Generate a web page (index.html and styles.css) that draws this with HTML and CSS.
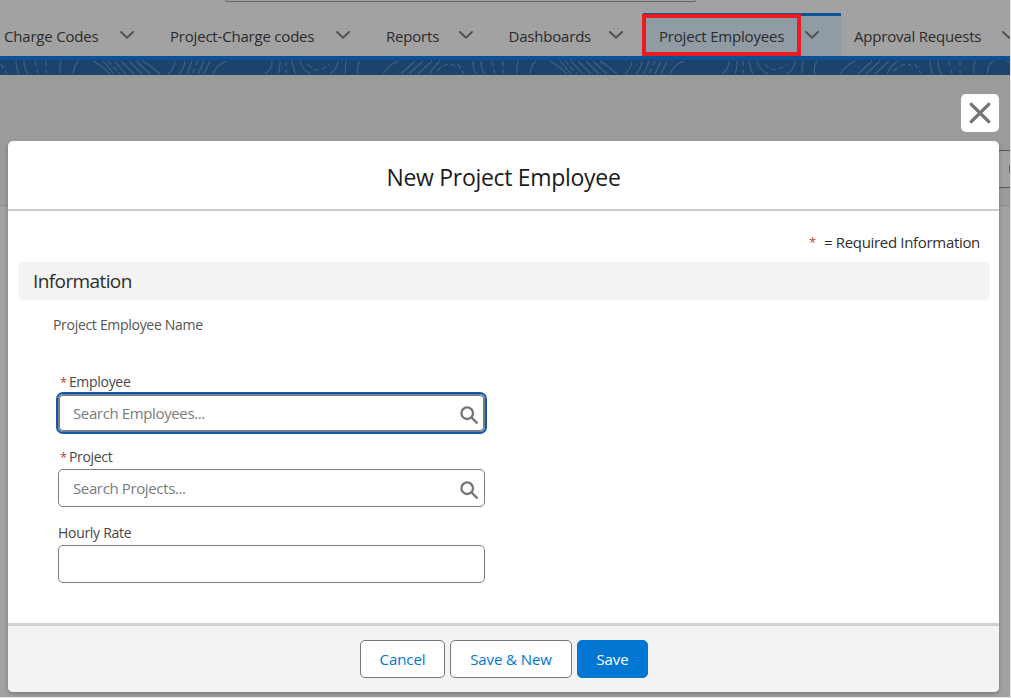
FILE: index.html
```html
<!DOCTYPE html>
<html lang="en">
<head>
    <meta charset="UTF-8">
    <meta name="viewport" content="width=device-width, initial-scale=1.0">
    <title>New Project Employee</title>
    <link rel="stylesheet" href="styles.css">
</head>
<body>
    <svg width="0" height="0" class="symbols">
        <symbol id="chevron" viewBox="0 0 14 8"><path d="M1 1l6 5.7L13 1" fill="none" stroke="currentColor" stroke-width="1.9" stroke-linecap="round"/></symbol>
        <symbol id="search" viewBox="0 0 18 18"><circle cx="7.2" cy="7.2" r="5.8" fill="none" stroke="currentColor" stroke-width="2.3"/><path d="M11.5 11.5l5.2 5.2" fill="none" stroke="currentColor" stroke-width="2.4" stroke-linecap="round"/></symbol>
    </svg>

    <div class="page">
        <div class="topbar">
            <div class="global-search"></div>
        </div>
        <nav class="nav">
            <a class="nav-item"><span>Charge Codes</span><svg><use href="#chevron"/></svg></a>
            <a class="nav-item"><span>Project-Charge codes</span><svg><use href="#chevron"/></svg></a>
            <a class="nav-item"><span>Reports</span><svg><use href="#chevron"/></svg></a>
            <a class="nav-item"><span>Dashboards</span><svg><use href="#chevron"/></svg></a>
            <a class="nav-item active"><span>Project Employees</span><svg><use href="#chevron"/></svg><i class="highlight"></i></a>
            <a class="nav-item"><span>Approval Requests</span><svg><use href="#chevron"/></svg></a>
        </nav>
        <svg class="band" width="1010" height="15">
            <defs>
                <pattern id="waves" width="457" height="15" patternUnits="userSpaceOnUse">
                    <g fill="none" stroke="#3f6286" stroke-width="1.1">
                        <path d="M16 1q0 8 3 13M24 1q0 8 4 13M61 1q-2 6-1 13M79 1q-5 4-6 13M93 1q8 4 17 13M103 1l11 13M114 1l12 13M121 1l13 13M129 1l13 13M136 1l14 13M143 1q8 5 17 13"/>
                        <path d="M175 1q-1 8-7 13M185 1q-1 8-6 13M192 1l-5 13M204 1l-6 13M210 1l-6 13M227 1q-10 3-14 13M272 1q0 9-7 13M280 1q0 8-2 13M292 1q1 8 4 13M300 1q2 9 11 13M338 1q-1 9-8 13M346 1q-1 8-1 13M360 1q-4 6-2 13"/>
                        <path d="M398 1q-9 4-15 13M415 1l-14 13M423 1l-14 13M432 1l-14 13M440 1q-7 6-10 13"/>
                        <path stroke-dasharray="5 3" d="M1 4l6 10M35 1l3 13M46 1v13M108 1l12 13M198 1l-6 13M286 1v13M308 4q9 12 21 0M437 11q12-12 20-3"/>
                    </g>
                </pattern>
            </defs>
            <rect width="1010" height="15" fill="#1c446b"/>
            <rect width="1010" height="15" fill="url(#waves)"/>
        </svg>
        <div class="list-header">
            <div class="list-search"><i></i></div>
        </div>

        <div class="dialog">
            <button class="close" aria-label="Close">
                <svg width="22" height="22" viewBox="0 0 22 22"><path d="M2.3 2.3l17.4 17.4M19.7 2.3L2.3 19.7" stroke="#747474" stroke-width="3.3" stroke-linecap="round"/></svg>
            </button>
            <div class="modal">
                <header>
                    <h1>New Project Employee</h1>
                </header>
                <main>
                    <p class="required"><b>*</b><span>= Required Information</span></p>
                    <h2>Information</h2>
                    <p class="name-label"><span>Project Employee Name</span></p>
                    <form>
                        <div class="field">
                            <label class="is-required"><b>*</b><span>Employee</span></label>
                            <div class="control focused">
                                <input type="text" placeholder="Search Employees...">
                                <svg><use href="#search"/></svg>
                            </div>
                        </div>
                        <div class="field">
                            <label class="is-required"><b>*</b><span>Project</span></label>
                            <div class="control">
                                <input type="text" placeholder="Search Projects...">
                                <svg><use href="#search"/></svg>
                            </div>
                        </div>
                        <div class="field">
                            <label><span>Hourly Rate</span></label>
                            <div class="control"><input type="text"></div>
                        </div>
                    </form>
                </main>
                <footer>
                    <button class="cancel">Cancel</button>
                    <button class="save-new">Save &amp; New</button>
                    <button class="save">Save</button>
                </footer>
            </div>
        </div>
    </div>
</body>
</html>
```
FILE: styles.css
```css
* {
    margin: 0;
    padding: 0;
    box-sizing: border-box;
}

body {
    font-family: 'Open Sans', 'Noto Sans', sans-serif;
    font-size: 15px;
    color: #2e2e2e;
    background: #e3e3e3;
    overflow: hidden;
}

.symbols {
    position: absolute;
}

.page {
    position: relative;
    width: 1010px;
    height: 697px;
    background: #a2a2a2;
    overflow: hidden;
}

.topbar {
    height: 13px;
}

.global-search {
    width: 471px;
    height: 2px;
    margin-left: 225px;
    border: 1px solid #656565;
    border-top: 0;
    border-radius: 0 0 4px 4px;
}

/* navigation */
.nav {
    display: grid;
    grid-template-columns: 166px 216px 122.5px 150.5px 198px 184px;
    width: 1037px;
    height: 47px;
    margin-left: -12px;
    border-bottom: 4px solid #0b5394;
}

.nav-item {
    position: relative;
    display: flex;
    align-items: center;
    justify-content: space-between;
    padding: 2px 20px 0 16px;
    font-size: 15px;
    letter-spacing: -0.2px;
    white-space: nowrap;
    color: #2b2b2b;
}

.nav-item svg {
    width: 14px;
    height: 8px;
    margin-top: -2px;
    color: #505050;
}

.nav-item.active {
    padding: 0 22px 0 16px;
    background: #919ba4;
    border-top: 3px solid #0b5394;
}

.nav-item.active svg {
    margin-top: -3px;
}

.nav-item:last-child {
    padding-left: 13px;
    padding-right: 9px;
}

.highlight {
    position: absolute;
    left: -1px;
    top: -2px;
    width: 159px;
    height: 42px;
    border: 4px solid #ea1c1f;
}

.band {
    display: block;
}

.list-header {
    height: 131px;
    padding-top: 75px;
    background: #9b9b9b;
    border-bottom: 1px solid #8c8c8c;
}

.list-search {
    display: flex;
    align-items: center;
    justify-content: flex-end;
    height: 38px;
    margin-left: 980px;
    border: 1px solid #555;
    border-right: 0;
    background: #a2a2a2;
}

.list-search i {
    width: 1px;
    height: 8px;
    background: #656565;
}

/* modal */
.dialog {
    position: absolute;
    left: 8px;
    top: 94px;
    width: 991px;
    display: flex;
    flex-direction: column;
    align-items: flex-end;
    gap: 9px;
}

.close {
    display: flex;
    align-items: center;
    justify-content: center;
    width: 38px;
    height: 38px;
    background: #fff;
    border: 0;
    border-radius: 5px;
}

.modal {
    display: flex;
    flex-direction: column;
    width: 991px;
    height: 551px;
    background: #fff;
    border-radius: 5px;
    box-shadow: 0 2px 4px rgba(0, 0, 0, 0.25);
    overflow: hidden;
}

.modal header {
    height: 70px;
    padding-top: 20px;
    text-align: center;
    border-bottom: 2px solid #cbcbcb;
}

h1 {
    font-size: 23px;
    line-height: 32px;
    font-weight: 400;
    letter-spacing: -0.3px;
    color: #1c1c1c;
}

main {
    flex: 1;
    padding: 21px 9px 0 10px;
}

.required {
    display: flex;
    justify-content: flex-end;
    gap: 8px;
    height: 30px;
    padding-right: 10px;
    line-height: 20px;
    letter-spacing: -0.32px;
}

b {
    font-weight: 400;
    font-size: 13px;
    color: #c23934;
}

h2 {
    height: 38px;
    padding-left: 15px;
    font-size: 19px;
    line-height: 38px;
    font-weight: 400;
    letter-spacing: -0.6px;
    background: #f3f3f3;
    border-radius: 5px;
}

.name-label {
    height: 72px;
    padding: 15px 0 0 35px;
    font-size: 14px;
    line-height: 20px;
    letter-spacing: -0.3px;
    color: #555;
}

form {
    width: 427px;
    margin-left: 40px;
}

.field {
    height: 75.4px;
}

label {
    display: flex;
    gap: 2px;
    height: 22px;
    font-size: 14px;
    line-height: 20px;
    letter-spacing: -0.3px;
    color: #484848;
}

.is-required {
    padding-left: 2px;
}

.control {
    display: flex;
    align-items: center;
    height: 38px;
    padding: 0 6px 0 14px;
    border: 1px solid #7c7c7c;
    border-radius: 5px;
}

.control.focused {
    box-shadow: 0 0 0 2px #1058a8, inset 0 0 0 1px #5d7fa8;
}

.control svg {
    width: 18px;
    height: 18px;
    margin-top: 4px;
    color: #747474;
}

input {
    flex: 1;
    border: 0;
    outline: 0;
    font: inherit;
    letter-spacing: -0.37px;
}

input::placeholder {
    color: #7b7b7b;
}

.modal footer {
    display: flex;
    justify-content: center;
    gap: 5px;
    height: 69px;
    padding: 14px 0 0 1px;
    background: #f3f3f3;
    border-top: 3px solid #d0d0d0;
}

footer button {
    height: 38px;
    padding-bottom: 1px;
    font: inherit;
    letter-spacing: -0.1px;
    color: #0176d3;
    background: #fff;
    border: 1px solid #777;
    border-radius: 5px;
}

.cancel {
    width: 85px;
}

.save-new {
    width: 122px;
}

footer .save {
    width: 71px;
    color: #fff;
    background: #0176d3;
    border-color: #0176d3;
}
```
